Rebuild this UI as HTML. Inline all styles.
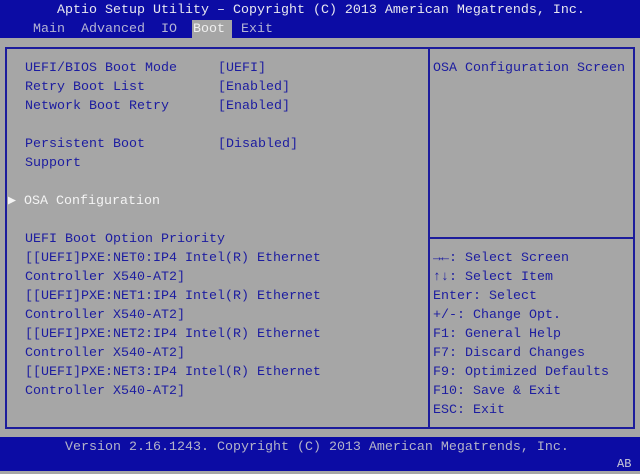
<!DOCTYPE html>
<html><head><meta charset="utf-8"><style>
body{margin:0;width:640px;height:471px;overflow:hidden;background:#a6a6a6;font-family:"Liberation Mono","DejaVu Sans Mono",monospace;font-size:13.33px;}
.t{position:absolute;white-space:pre;line-height:19px;height:19px;color:#1c1ca0;}
.w{color:#f4f4f4}
.top{position:absolute;left:0;top:0;width:640px;height:38px;background:#0c0ca4;}
.foot{position:absolute;left:0;top:437px;width:640px;height:34px;background:#0c0ca4;}
.ln{position:absolute;background:#1c1c9c;}
</style></head><body>
<div class="top"></div>
<div class="t" style="left:57px;top:1px;color:#e8e8f0">Aptio Setup Utility – Copyright (C) 2013 American Megatrends, Inc.</div>
<div style="position:absolute;left:192px;top:20px;width:40px;height:18px;background:#a6a6a6"></div>
<div class="t" style="left:33px;top:20px;color:#b4b4d4">Main  Advanced  IO  <span style="color:#f0f0f0">Boot</span>  Exit</div>

<div class="ln" style="left:5px;top:47px;width:630px;height:2px"></div>
<div class="ln" style="left:5px;top:427px;width:630px;height:2px"></div>
<div class="ln" style="left:5px;top:47px;width:2px;height:382px"></div>
<div class="ln" style="left:633px;top:47px;width:2px;height:382px"></div>
<div class="ln" style="left:428px;top:47px;width:2px;height:382px"></div>
<div class="ln" style="left:430px;top:237px;width:203px;height:2px"></div>

<div class="t" style="left:25px;top:59px">UEFI/BIOS Boot Mode</div>
<div class="t" style="left:218px;top:59px">[UEFI]</div>
<div class="t" style="left:25px;top:78px">Retry Boot List</div>
<div class="t" style="left:218px;top:78px">[Enabled]</div>
<div class="t" style="left:25px;top:97px">Network Boot Retry</div>
<div class="t" style="left:218px;top:97px">[Enabled]</div>
<div class="t" style="left:25px;top:135px">Persistent Boot</div>
<div class="t" style="left:218px;top:135px">[Disabled]</div>
<div class="t" style="left:25px;top:154px">Support</div>
<div class="t w" style="left:8px;top:192px">▶ OSA Configuration</div>
<div class="t" style="left:25px;top:230px">UEFI Boot Option Priority</div>
<div class="t" style="left:25px;top:249px">[[UEFI]PXE:NET0:IP4 Intel(R) Ethernet</div>
<div class="t" style="left:25px;top:268px">Controller X540-AT2]</div>
<div class="t" style="left:25px;top:287px">[[UEFI]PXE:NET1:IP4 Intel(R) Ethernet</div>
<div class="t" style="left:25px;top:306px">Controller X540-AT2]</div>
<div class="t" style="left:25px;top:325px">[[UEFI]PXE:NET2:IP4 Intel(R) Ethernet</div>
<div class="t" style="left:25px;top:344px">Controller X540-AT2]</div>
<div class="t" style="left:25px;top:363px">[[UEFI]PXE:NET3:IP4 Intel(R) Ethernet</div>
<div class="t" style="left:25px;top:382px">Controller X540-AT2]</div>

<div class="t" style="left:433px;top:59px">OSA Configuration Screen</div>
<div class="t" style="left:433px;top:249px"><b>→←</b>: Select Screen</div>
<div class="t" style="left:433px;top:268px"><b>↑↓</b>: Select Item</div>
<div class="t" style="left:433px;top:287px">Enter: Select</div>
<div class="t" style="left:433px;top:306px">+/-: Change Opt.</div>
<div class="t" style="left:433px;top:325px">F1: General Help</div>
<div class="t" style="left:433px;top:344px">F7: Discard Changes</div>
<div class="t" style="left:433px;top:363px">F9: Optimized Defaults</div>
<div class="t" style="left:433px;top:382px">F10: Save &amp; Exit</div>
<div class="t" style="left:433px;top:401px">ESC: Exit</div>

<div class="foot"></div>
<div class="t" style="left:65px;top:438px;color:#b4b4c8">Version 2.16.1243. Copyright (C) 2013 American Megatrends, Inc.</div>
<div class="t" style="left:617px;top:455px;color:#c8c8d8;font-size:12px">AB</div>
</body></html>
